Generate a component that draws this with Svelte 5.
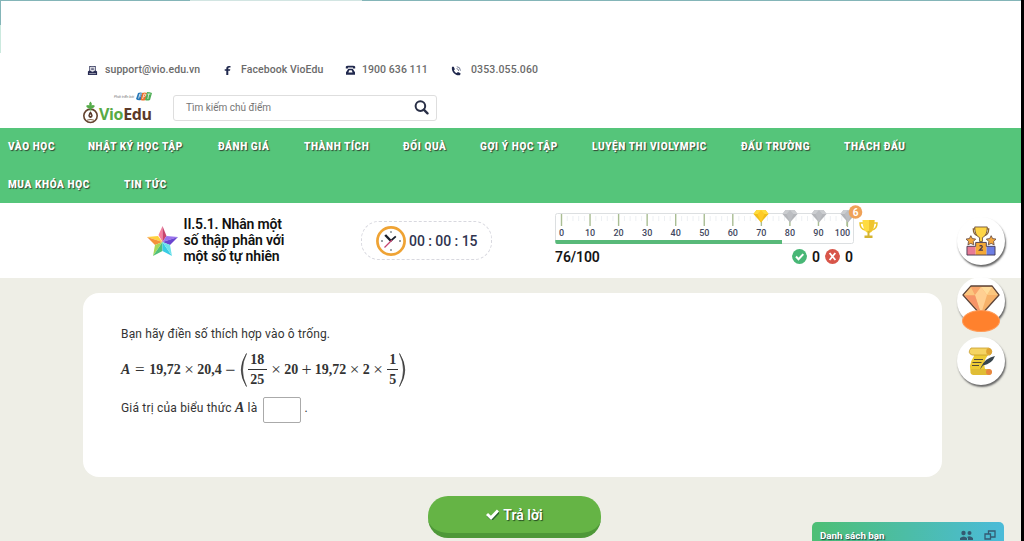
<script>
  const nav = [
    ['VÀO HỌC', 80], ['NHẬT KÝ HỌC TẬP', 130], ['ĐÁNH GIÁ', 86], ['THÀNH TÍCH', 99],
    ['ĐỔI QUÀ', 77], ['GỢI Ý HỌC TẬP', 112], ['LUYỆN THI VIOLYMPIC', 149],
    ['ĐẤU TRƯỜNG', 103], ['THÁCH ĐẤU', 130], ['MUA KHÓA HỌC', 116], ['TIN TỨC', 80]
  ];
  const ticks = Array.from({ length: 11 }, (_, i) => i);
  const minor = Array.from({ length: 51 }, (_, i) => i);
</script>

<div class="page">
  <div class="edge"></div>
  <header>
    <div class="contacts">
      <span class="contact c1"><svg width="11" height="11" viewBox="0 0 12 12"><path d="M2.5 1h7v5l1.5 1v4H1V7l1.5-1z" fill="#272b52"/><path d="M3.7 2.2h4.6V6L6 7.2 3.7 6zM2.3 9.4h7.4" fill="#fff" stroke="#fff" stroke-width=".6"/><path d="M4.5 3.5h3M4.5 5.1h3" stroke="#272b52" stroke-width=".9"/></svg>support@vio.edu.vn</span>
      <span class="contact c2"><svg width="7" height="10" viewBox="0 0 7 10"><path d="M6.5 1H4.9C3.1 1 2.3 2 2.3 3.4v.8H.7v1.6h1.6V10h2V5.8H6l.3-1.6h-2v-.7c0-.6.3-.9.9-.9h1.3z" fill="#20284d"/></svg>Facebook VioEdu</span>
      <span class="contact c3"><svg width="11" height="10" viewBox="0 0 11 10"><path d="M.8 3.4V1.8Q1 .8 3 .8h5q2 0 2.2 1v1.6H8V2.4H3v1zM3.3 3.8h4.4l2.3 3.4V9.8H1V7.2z" fill="#20284d"/><path d="M3.4 7.6l.9-2.4h2.4l.9 2.4z" fill="#fff"/></svg>1900 636 111</span>
      <span class="contact c4"><svg width="11" height="11" viewBox="0 0 12 12"><path d="M1.2 2L3 1.8l1.2 2.8-1 1.3c.7 1.3 1.6 2.2 3 2.9l1.4-1.2 2.8 1.4-.4 2C5.3 12.6-.4 7.2 1.2 2z" fill="#20284d"/><path d="M6 3.9q2.3.3 2.4 2.6M6.3 1.8q3.9.2 4 4.4" stroke="#68708b" stroke-width="1" fill="none"/></svg>0353.055.060</span>
    </div>
    <div class="brandrow">
      <div class="logo">
        <div class="fpt"><i>Phát triển bởi</i><svg width="16" height="9" viewBox="0 0 16 9"><path d="M2 1q2-1 5 0L5 8Q2 9 0 7z" fill="#2878b7"/><path d="M6 1q3-1 5 0L9.5 8Q7 9 4.7 8z" fill="#ed702b"/><path d="M11 0q3 0 5 1l-2 7q-3 1-5 0z" fill="#4fae56"/><path d="M2.6 6.5L3.8 2h2.1M3.3 4h1.8M6.6 7L8 2h1q1.3.3.6 1.8-.8.8-2 .7M11.4 2h3M12.8 2l-1 5" fill="none" stroke="#fff" stroke-width=".7"/></svg></div>
        <div class="vio"><svg width="17" height="23" viewBox="0 0 17 23"><circle cx="8.5" cy="14.8" r="6.7" fill="#fff" stroke="#65432e" stroke-width="1.6"/><path d="M8.5 5.5v4" stroke="#4cab49" stroke-width="1.6"/><path d="M8.5 7.5Q3.8 7 4.4 4.4q2-1 2.9.1-.7-2.6 1.2-3.9 1.9 1.3 1.2 3.9.9-1.1 2.9-.1.6 2.6-4.1 3.1z" fill="#55ac49"/><path d="M8.5 10.2q2.2 2.4 2.2 4.2 0 2.1-2.2 2.7-2.2-.6-2.2-2.7 0-1.8 2.2-4.2z" fill="#583829"/><path d="M5 19.2q3.5-1.3 7 0" stroke="#8a6b52" stroke-width="1.1" fill="none"/><circle cx="8.5" cy="14.2" r=".7" fill="#fff"/></svg><b><em>Vio</em>Edu</b></div>
      </div>
      <div class="search"><span>Tìm kiếm chủ điểm</span><svg width="15" height="15" viewBox="0 0 15 15"><circle cx="6.4" cy="6.1" r="4.8" fill="none" stroke="#292f46" stroke-width="2"/><path d="M9.8 9.6l3.7 3.8" stroke="#292f46" stroke-width="2.3" stroke-linecap="round"/></svg></div>
    </div>
  </header>

  <nav>
    {#each nav as [label, width]}
      <span style:width="{width}px">{label}</span>
    {/each}
  </nav>

  <section class="status">
    <svg class="star" width="31" height="31" viewBox="0 0 31 31"><path d="M15.5 0v16l-4-7z" fill="#f77f9f"/><path d="M15.5 0l4 10-4 6z" fill="#c8446f"/><path d="M0 11l11-1 4.5 6z" fill="#ffd13d"/><path d="M0 11l8 8 7.5-3z" fill="#f59139"/><path d="M31 11l-11.5-1-4 6z" fill="#9a73ed"/><path d="M31 11l-8 8-7.5-3z" fill="#6a45cf"/><path d="M6 30l2-11 7.5-3z" fill="#a8d858"/><path d="M6 30l9.5-5v-9z" fill="#4fc07a"/><path d="M25 30l-9.5-5v-9z" fill="#38cce5"/><path d="M25 30l-2-11-7.5-3z" fill="#6fe3ea"/></svg>
    <h1>II.5.1. Nhân một<br>số thập phân với<br>một số tự nhiên</h1>
    <div class="timer">
      <svg width="30" height="30" viewBox="0 0 30 30"><circle cx="15" cy="15" r="13.6" fill="#fff" stroke="#efa334" stroke-width="2.7"/><path d="M15 5v2M15 23v2M5 15h2M23 15h2" stroke="#758087" stroke-width="1.3"/><path d="M15 15L9.2 9" stroke="#171e2a" stroke-width="2.4"/><path d="M14.3 15.2l5.5-4.8" stroke="#171e2a" stroke-width="1.8"/><path d="M16 14l-7.5 7.5" stroke="#c64370" stroke-width="1.3"/></svg>
      <span>00 : 00 : 15</span>
    </div>
    <div class="score">
      <svg class="ruler" width="326" height="42" viewBox="0 0 326 42">
        <rect x=".5" y="10.5" width="298" height="30" rx="2" fill="#fff" stroke="#dcdfe1"/>
        {#each minor as n}
          {#if n % 5 !== 0}<path d="M{6.5 + n * 5.72} 13v5" stroke="#edf0f3" stroke-width="1"/>{/if}
        {/each}
        {#each ticks as n}
          <path d="M{6.5 + n * 28.55} 11v12" stroke="#a9bd93" stroke-width="1.4"/>
          <text x={n === 10 ? 287.5 : 6.5 + n * 28.55} y="33.4" text-anchor="middle">{n * 10}</text>
        {/each}
        <path d="M.3 37H227v4H2Q.3 41 .3 39z" fill="#58b979"/>
        {#each [206, 235, 264, 293] as x, n}
          <g transform="translate({x - 7.5} 7)">
            <path d="M3 0h9l3 4-7.5 8.5L0 4z" fill={n === 0 ? '#f1be19' : '#b4b6ba'}/>
            <path d="M3 0h9l3 4H0z" fill={n === 0 ? '#ffdc3c' : '#cbcdd0'}/>
            <path d="M4 4L7.5 0 11 4 7.5 12.5z" fill={n === 0 ? '#ffcb25' : '#bcbec2'}/>
          </g>
        {/each}
        <path d="M292.5 19v5" stroke="#a9bd93" stroke-width="1.2"/>
        <circle cx="300.5" cy="9" r="6.8" fill="#efa258"/>
        <text x="300.5" y="12.5" text-anchor="middle" class="badge">6</text>
        <g transform="translate(304 17)"><path d="M4.5 3H1q0 6 5 7M14.5 3H18q0 6-5 7" fill="none" stroke="#ecc529" stroke-width="1.5"/><path d="M3.5 0h12q0 12-6 13-6-1-6-13z" fill="#ffdc40"/><path d="M10 0h5.5q0 12-5.5 13z" fill="#efc42e"/><path d="M8.5 11h2v4.5h3V18h-8v-2.5h3z" fill="#d4b431"/></g>
      </svg>
      <div class="result"><strong>76/100</strong><div class="answers">
        <svg width="15" height="15" viewBox="0 0 15 15"><circle cx="7.5" cy="7.5" r="7.4" fill="#48b776"/><path d="M4 7.5l2.5 2.7 4.8-5.1" stroke="#fff" stroke-width="2" fill="none"/></svg><b>0</b>
        <svg width="15" height="15" viewBox="0 0 15 15"><circle cx="7.5" cy="7.5" r="7.4" fill="#d85549"/><path d="M4.6 4l5.8 7M10.3 4l-5.7 7" stroke="#fff" stroke-width="1.8"/></svg><b>0</b>
      </div></div>
    </div>
  </section>

  <main>
    <article>
      <p>Bạn hãy điền số thích hợp vào ô trống.</p>
      <div class="math"><i>A</i><span class="eq">=</span><span>19,72</span><span class="op">×</span><span>20,4</span><span class="minus">−</span><svg class="paren" width="8" height="34" viewBox="0 0 8 34"><path d="M7.5.5Q-3 17 7.5 33.5-.5 17 7.5.5z" fill="#333" stroke="#333" stroke-width=".6"/></svg><span class="frac"><span>18</span><span>25</span></span><span class="op">×</span><span>20</span><span class="plus">+</span><span>19,72</span><span class="op">×</span><span>2</span><span class="op">×</span><span class="frac small"><span>1</span><span>5</span></span><svg class="paren" width="8" height="34" viewBox="0 0 8 34"><path d="M.5.5Q11 17 .5 33.5 8.5 17 .5.5z" fill="#333" stroke="#333" stroke-width=".6"/></svg></div>
      <div class="answer"><span>Giá trị của biểu thức <i>A</i> là</span><span class="blank"></span><span>.</span></div>
    </article>
    <button><svg width="13" height="11" viewBox="0 0 13 11"><path d="M1 5.5l4 3.8L12 2" stroke="#28632a" stroke-width="3" fill="none" transform="translate(.8 .8)"/><path d="M1 5l4 3.8L12 1.5" stroke="#fff" stroke-width="3" fill="none"/></svg>Trả lời</button>
  </main>

  <aside class="tools">
    <div class="tool"><svg width="30" height="30" viewBox="0 0 31 31"><path d="M1 21h9v9H1z" fill="#e87b96"/><path d="M21 21h9v9h-9z" fill="#6c7ee3"/><path d="M10 17h11v13H10z" fill="#f4a938"/><path d="M1 21h9v-4h11v4h9v9H1z" fill="none" stroke="#3e334c" stroke-width=".9"/><path d="M9.5 3H7.5q0 6 5 7M21.5 3h2q0 6-5 7" fill="none" stroke="#8a6335" stroke-width="1.3"/><path d="M9 1h13q0 9-5 11v4h-3v-4Q9 10 9 1z" fill="#ffd545" stroke="#6a4c35" stroke-width=".9"/><path d="M5 10l1.5 3 3.5.5-2.5 2.6.6 3.4L5 18l-3 1.5.6-3.4L0 13.5l3.5-.5zM26 10l1.5 3 3.5.5-2.5 2.6.6 3.4L26 18l-3 1.5.6-3.4-2.6-2.6 3.5-.5z" fill="#f4a83e" stroke="#5b423e" stroke-width=".8"/><path d="M14 20.5q3.4-1 2.6 1.6L14 25h3.5" fill="none" stroke="#47364a" stroke-width="1.3"/></svg></div>
    <div class="tool gemtool"><svg width="38" height="31" viewBox="0 0 38 31"><path d="M9 1h21l7 9-18 20L1 10z" fill="#f6b169" stroke="#5d4439" stroke-width="1.3" stroke-linejoin="round"/><path d="M9 2l4 8H2zM30 2l-5 8h11z" fill="#fbc67e"/><path d="M9 2h10l-6 8z" fill="#f9a56b"/><path d="M19 2h11l-5 8z" fill="#ffdc9b"/><path d="M13 10l6-8 6 8-6 19z" fill="#ffcf92"/><path d="M2.5 10.5H13l6 18z" fill="#f69468"/></svg><div class="oval"></div></div>
    <div class="tool"><svg width="28" height="29" viewBox="0 0 28 29"><path d="M4 2h16q4 3 1 6-7 8-1 18H5q-5-6 2-17z" fill="#edcb34"/><path d="M4 1h18q5 3 1 7H5q-5-2-1-7z" fill="#f5d463" stroke="#c79c2c" stroke-width=".8"/><ellipse cx="22" cy="4.5" rx="2.8" ry="3.3" fill="#dfa331"/><path d="M4 22h18q5 2 1 6H6q-4-1-2-6z" fill="#e0bd35"/><circle cx="22" cy="25" r="3" fill="#e8863f"/><path d="M7 12.5h9M5.5 15.5h9M5 18.5h7" stroke="#524b38" stroke-width="1.1"/><path d="M14 20Q18 11 28 9q-3 8-12 9.5l-3 4z" fill="#38464d"/></svg></div>
  </aside>

  <div class="friends"><b>Danh sách bạn</b><svg width="13" height="12" viewBox="0 0 13 12"><path d="M0 11V9q4-3 7 0v2zM8 11V9L7 8q3-2 6 1v2z" fill="#345a72"/><circle cx="3.5" cy="4" r="2.2" fill="#345a72"/><circle cx="9.5" cy="4" r="2" fill="#345a72"/></svg><svg width="12" height="11" viewBox="0 0 12 11"><path d="M4.5 1h6.5v6H4.5z" fill="none" stroke="#345a72" stroke-width="1.3"/><path d="M1 4h5.5v5H1z" fill="#4bbbd0" stroke="#345a72" stroke-width="1.3"/></svg></div>
  <div class="black"></div>
</div>

<style>
  :global(body) { margin: 0; overflow: hidden; }
  * { box-sizing: border-box; }
  .page { width: 1024px; height: 541px; position: relative; overflow: hidden; background: #eeeee6; font-family: Roboto, sans-serif; color: #333; }
  .edge { position: absolute; z-index: 2; width: 1021px; height: 1px; background: linear-gradient(90deg, #84b5b8 190px, #d2e5e2 190px 362px, #84b5b8 362px); }
  .edge::after { content: ''; display: block; width: 1px; height: 53px; background: linear-gradient(#84b5b8 25px, #cbe9de 25px); }
  header { height: 128px; background: #fff; padding: 60px 0 0 87px; }
  .contacts { height: 18px; display: flex; align-items: center; color: #6b6b6b; font-size: 10.5px; font-weight: 500; }
  .contact { display: flex; align-items: center; white-space: nowrap; letter-spacing: .07px; }
  .contact svg { margin-top: 2px; margin-right: 7px; }
  .c1 { width: 137px; }
  .c2 { width: 121px; }
  .c2 svg { margin-right: 10px; }
  .c3 { width: 106px; }
  .c3 svg { margin-right: 6px; }
  .c4 { letter-spacing: .14px; }
  .c4 svg { margin-right: 9px; }
  .brandrow { display: flex; margin: 14px 0 0 -5px; }
  .logo { width: 91px; height: 32px; }
  .fpt { display: flex; justify-content: flex-end; width: 70px; height: 9px; gap: 2px; align-items: center; }
  .fpt i { font-size: 3.5px; color: #777; }
  .vio { display: flex; margin-top: -1px; height: 24px; align-items: center; }
  .vio b { color: #5c3a29; font: bold 16px/18px "Open Sans", sans-serif; letter-spacing: -.35px; margin-top: 4px; }
  .vio em { color: #58aa45; font-style: normal; }
  .search { width: 264px; height: 26px; display: flex; justify-content: space-between; align-items: center; border: 1px solid #dedede; border-radius: 3px; padding: 0 7px 0 12px; margin-top: 2.5px; color: #757575; font-size: 10px; }
  nav { background: #55c57a; height: 75px; width: 1021px; display: flex; flex-wrap: wrap; align-content: flex-start; padding-left: 8px; }
  nav span { flex: none; height: 37.5px; line-height: 37px; white-space: nowrap; color: #fff; font-size: 10px; font-weight: 900; letter-spacing: .6px; text-shadow: 1px 1px 1px #343; }
  .status { height: 75px; width: 1021px; background: #fff; display: flex; padding-left: 147px; align-items: flex-start; }
  .star { margin-top: 23px; }
  h1 { font-size: 14px; font-weight: 600; line-height: 16px; letter-spacing: -.15px; margin: 13px 0 0 5.5px; width: 177.5px; color: #111; white-space: nowrap; }
  .timer { width: 131px; height: 39px; border: 1px dashed #d8d8df; border-radius: 18px; display: flex; align-items: center; padding-left: 14px; margin-top: 18px; }
  .timer span { color: #30344f; font-size: 14px; font-weight: 500; letter-spacing: -.05px; margin-left: 3px; white-space: nowrap; }
  .score { margin-left: 63px; width: 326px; }
  .ruler { display: block; overflow: visible; }
  .ruler text { font: 500 9px Roboto, sans-serif; fill: #434860; }
  .ruler .badge { font-size: 10px; font-weight: bold; fill: #fff; }
  .result { display: flex; justify-content: space-between; align-items: center; width: 298px; height: 23px; color: #151515; }
  .result strong { font-size: 14px; font-weight: 600; letter-spacing: -.1px; }
  .answers { display: flex; align-items: center; font-size: 14px; }
  .answers b { margin: 0 5px; font-weight: 600; }
  .answers b:last-child { margin-right: 0; }
  main { padding: 15px 0 0 83px; }
  article { width: 859px; height: 184px; border-radius: 16px; background: #fff; padding: 32px 0 0 38px; }
  p { margin: 0; line-height: 18px; font-size: 12px; white-space: nowrap; letter-spacing: .16px; }
  .math { height: 38px; margin-top: 8px; display: flex; align-items: center; font: bold 14px/16px "Liberation Serif", serif; }
  .math > span, .math > i { flex: none; }
  .eq { font-weight: normal; width: 19px; text-align: center; font-size: 17px; }
  .op { width: 16.5px; text-align: center; font-weight: normal; font-size: 17px; }
  .minus { width: 17px; text-align: center; font-size: 18px; font-weight: normal; }
  .plus { width: 16.5px; text-align: center; font-size: 18px; font-weight: normal; }
  .paren { flex: none; }
  .frac { display: grid; width: 19px; margin: 0 1px; text-align: center; }
  .frac > span:first-child { border-bottom: 1px solid #333; height: 18px; }
  .frac > span:last-child { height: 18px; padding-top: 2px; }
  .frac.small { width: 11px; }
  .answer { margin-top: 6px; display: flex; align-items: center; font-size: 12px; height: 26px; white-space: nowrap; letter-spacing: .19px; }
  .answer i { font: italic bold 14px "Liberation Serif", serif; }
  .blank { width: 38px; height: 26px; border: 1px solid #aaa; border-radius: 2px; margin: 3px 3px 0 6px; }
  button { width: 173px; height: 42px; display: flex; align-items: center; justify-content: center; border: 0; border-bottom: 5px solid #4e9838; border-radius: 20px; background: #65b445; color: #fff; font: 600 14px Roboto, sans-serif; margin: 19px 0 0 345px; gap: 4px; text-shadow: 1px 1px 1px #244a20; }
  .tools { position: absolute; left: 957px; top: 217px; display: grid; gap: 12px; }
  .tool { width: 48px; height: 48px; background: #fff; border-radius: 50%; box-shadow: 1px 2px 2px #666; display: flex; align-items: center; justify-content: center; position: relative; }
  .gemtool { align-items: flex-start; padding-top: 8px; }
  .oval { position: absolute; left: 5px; top: 33px; width: 38px; height: 22px; background: #ff812d; border-radius: 50%; border: 1px solid #ff9b58; }
  .friends { position: absolute; left: 812px; top: 522px; width: 192px; height: 24px; border-radius: 5px 5px 0 0; background: linear-gradient(90deg, #4dbf75, #4bbbd9); display: flex; align-items: center; padding: 2px 8px 0; gap: 11px; color: #fff; font-size: 9.8px; text-shadow: 1px 1px 1px #244; }
  .friends b { flex: 1; }
  .black { position: absolute; right: 0; top: 0; width: 3px; height: 541px; background: #000; }
</style>
